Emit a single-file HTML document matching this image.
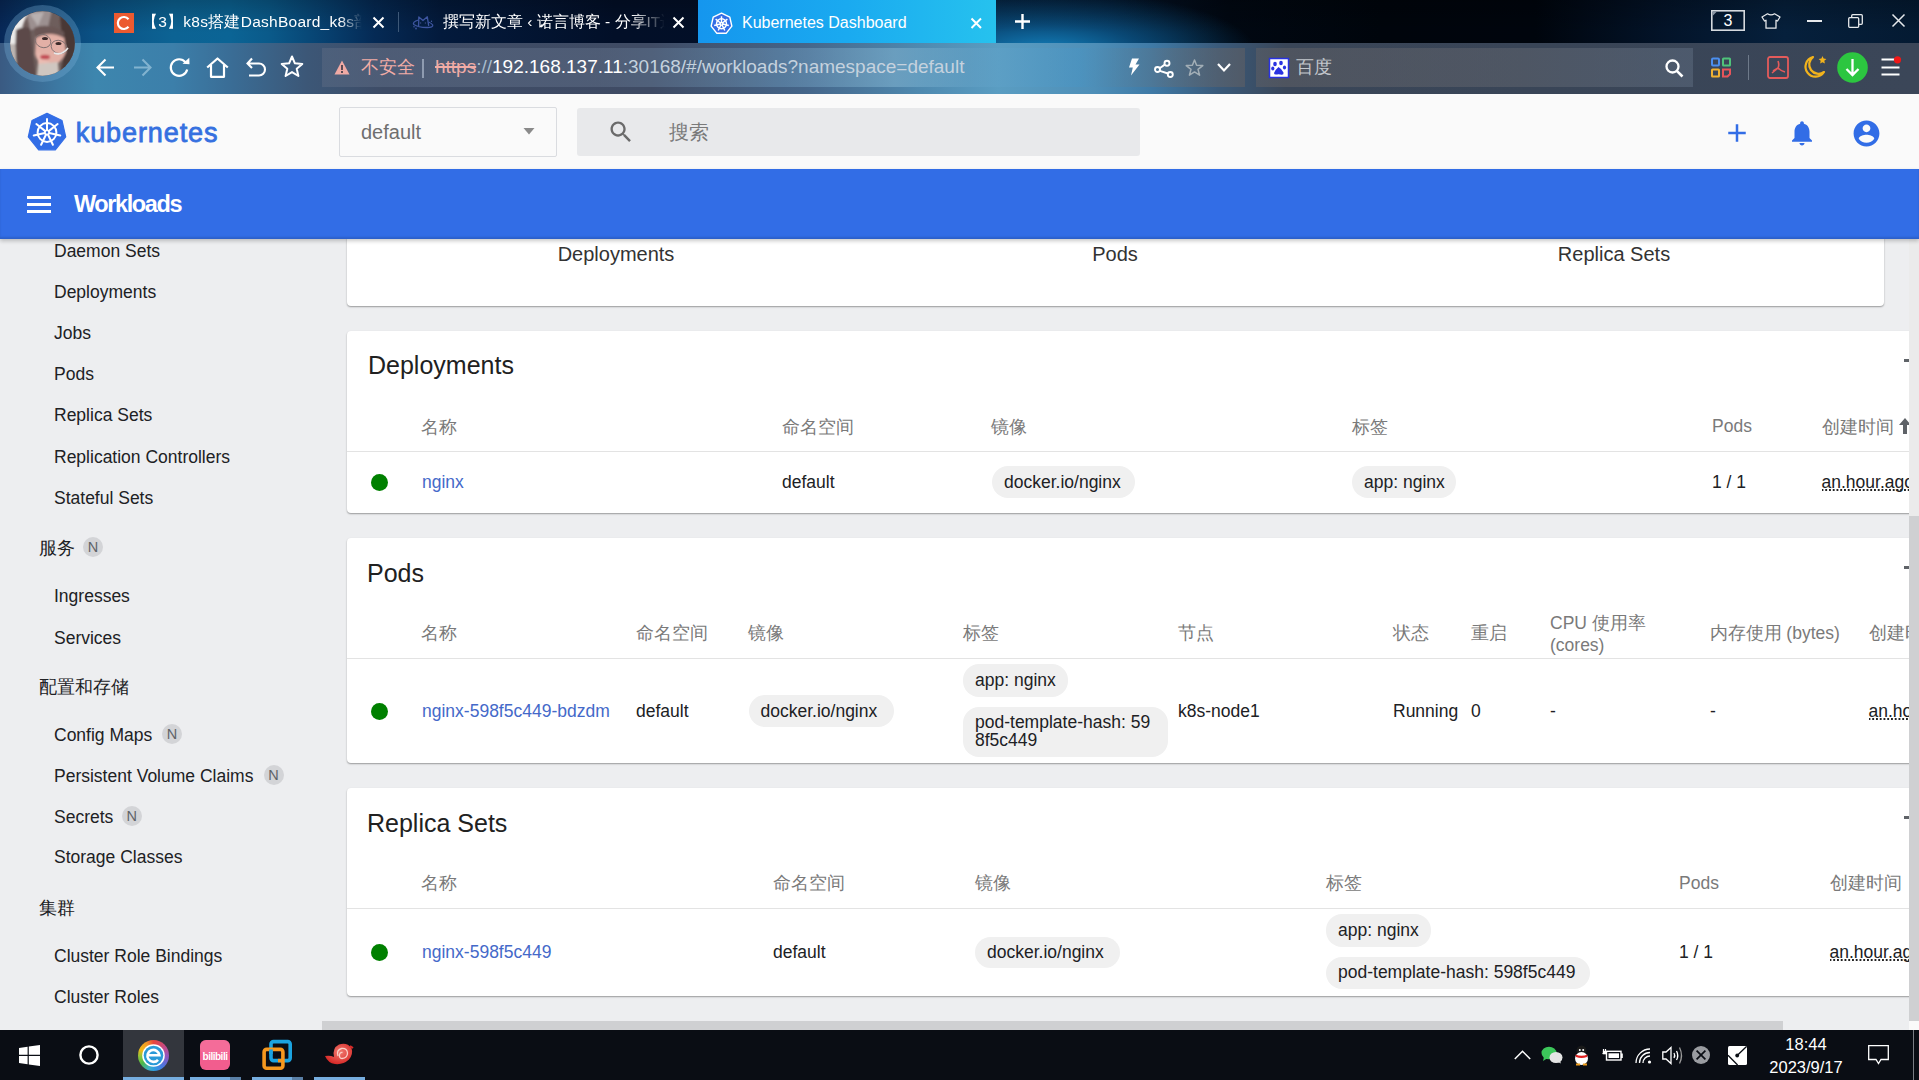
<!DOCTYPE html><html><head><meta charset="utf-8"><style>
*{box-sizing:border-box;margin:0;padding:0}
html,body{width:1919px;height:1080px;overflow:hidden;background:#edeef0;font-family:"Liberation Sans",sans-serif}
body{position:relative}
.a,.t{position:absolute}
.t{white-space:nowrap}
.badge{position:absolute;width:20px;height:20px;border-radius:10px;background:#d3d4d7;color:#5f6368;font-size:14.5px;text-align:center;line-height:21px}
.chip{position:absolute;background:#f0f0f0;border-radius:16px}
.dot{position:absolute;width:17px;height:17px;border-radius:50%;background:#008000}
.card{position:absolute;background:#fff;border-radius:4px;box-shadow:0 1px 2px rgba(0,0,0,.28),0 1px 1px rgba(0,0,0,.10)}
.ago{background-image:radial-gradient(circle at 1px 1px,#222 0.9px,rgba(0,0,0,0) 1.25px);background-size:3.75px 2px;background-repeat:repeat-x;background-position:-0.5px 100%;padding-left:0}
svg{position:absolute;overflow:visible}
</style></head><body>
<div class="a" style="left:0px;top:0px;width:1919px;height:43px;background:linear-gradient(90deg,#072858 0%,#093a6c 2%,#0b5285 5%,#0c6394 9%,#0b6495 12%,#0a5a8a 14%,#07406f 17%,#052a55 19.5%,#031a3c 23%,#020f28 32%,#030f26 48%,#041c38 52%,#03142a 58%,#010812 64%,#00050c 72%,#00050d 80%,#03142a 87%,#06203c 93%,#041a32 100%)"></div>
<div class="a" style="left:996px;top:0px;width:400px;height:43px;background:radial-gradient(ellipse 210px 62px at 50px 52px,rgba(20,130,190,1) 0%,rgba(12,95,150,.7) 45%,rgba(5,40,70,0) 100%)"></div>
<div class="a" style="left:0px;top:0px;width:1919px;height:43px;background:linear-gradient(180deg,rgba(0,0,0,.22),rgba(0,0,0,0) 75%)"></div>
<div class="a" style="left:0px;top:43px;width:1919px;height:51px;background:linear-gradient(90deg,#3a5a82 0%,#3c78a2 3%,#3d86ae 5%,#3c7faa 9%,#3a6d96 12%,#3c5777 16%,#3e4c66 20%,#3f4b64 34%,#45668a 42%,#4f8ab0 48%,#5a9dc2 52%,#4e8fb8 57%,#3f7aa6 60%,#3a5a7a 63.5%,#3a4658 67%,#394557 80%,#3b4658 100%)"></div>
<div class="a" style="left:322px;top:48px;width:923px;height:39px;background:linear-gradient(90deg,rgba(90,105,130,.55) 0%,rgba(95,110,135,.5) 30%,rgba(120,170,205,.35) 50%,rgba(150,200,225,.4) 62%,rgba(110,170,205,.3) 70%,rgba(70,150,200,.35) 82%,rgba(100,110,120,.45) 92%,rgba(95,95,100,.6) 100%)"></div>
<div class="a" style="left:1256px;top:48px;width:437px;height:39px;background:linear-gradient(90deg,rgba(95,95,100,.55),rgba(95,100,110,.55) 60%,rgba(95,110,130,.5))"></div>
<svg style="left:0px;top:0px" width="86" height="86" viewBox="0 0 86 86">
<defs><clipPath id="av"><circle cx="42.5" cy="43.5" r="32.3"/></clipPath>
<filter id="bl" x="-10%" y="-10%" width="120%" height="120%"><feGaussianBlur stdDeviation="1.3"/></filter>
<filter id="bl2"><feGaussianBlur stdDeviation="0.6"/></filter></defs>
<circle cx="42.5" cy="43.5" r="35.4" fill="none" stroke="rgba(120,175,215,.33)" stroke-width="6.2"/>
<g clip-path="url(#av)">
<rect x="0" y="0" width="86" height="86" fill="#6e5e5c"/>
<g filter="url(#bl)">
<path d="M6 8 L30 8 L24 22 L18 40 L14 58 L6 58 Z" fill="#ecebea"/>
<path d="M6 44 L16 44 L20 62 L10 66 Z" fill="#bdb6b2"/>
<path d="M26 10 L52 10 L48 28 L30 30 Z" fill="#9c9090"/>
<path d="M30 14 L44 12 L38 26 Z" fill="#b8b0b0"/>
<path d="M16 30 Q22 26 30 28 L36 80 L20 80 Q14 60 16 30 Z" fill="#5c4a48"/>
<path d="M60 16 L76 20 L78 80 L58 80 Q66 60 62 40 Z" fill="#4a3836"/>
<path d="M36 33 Q50 28 64 36 L66 52 Q62 64 50 66 Q38 66 35 54 Z" fill="#e3b0a6"/>
<path d="M38 50 Q42 60 50 62 L46 68 L38 66 Z" fill="#eabcb2"/>
<path d="M34 28 Q48 22 64 32 L64 38 Q50 30 36 38 Z" fill="#6a5654"/>
<path d="M38 64 L58 62 L60 86 L36 86 Z" fill="#cfc6c0"/>
<ellipse cx="45" cy="57" rx="5" ry="2.3" fill="#c24a52"/>
</g>
<g filter="url(#bl2)">
<ellipse cx="45" cy="38.5" rx="3" ry="1.6" fill="#3a2a2a"/>
<ellipse cx="58.5" cy="43.5" rx="3" ry="1.6" fill="#3a2a2a"/>
<g fill="none" stroke="#807070" stroke-width="0.9"><ellipse cx="43" cy="41" rx="8" ry="6.5" transform="rotate(20 43 41)"/><ellipse cx="59" cy="47" rx="8" ry="6.5" transform="rotate(20 59 47)"/></g>
<path d="M54 53 Q62 56 68 48" fill="none" stroke="#e8e8e8" stroke-width="1.6"/>
</g>
</g></svg>
<div class="a" style="left:114px;top:13px;width:20px;height:20px;background:#ec5a30"></div>
<svg style="left:114px;top:13px" width="20" height="20" viewBox="0 0 20 20"><path d="M14.5 6.2 A6 6 0 1 0 14.5 13.8" fill="none" stroke="#fff" stroke-width="2.2"/></svg>
<div class="t" style="left:142px;top:12px;font-size:15.5px;letter-spacing:0.25px;line-height:20px;color:#fff;width:222px;overflow:hidden;-webkit-mask-image:linear-gradient(90deg,#000 89%,transparent 99%)">【3】k8s搭建DashBoard_k8s部署</div>
<svg style="left:373px;top:17px" width="11" height="11" viewBox="0 0 11 11"><path d="M0.5 0.5 L10.5 10.5 M10.5 0.5 L0.5 10.5" stroke="#fff" stroke-width="2"/></svg>
<div class="a" style="left:398px;top:12px;width:1.2px;height:20px;background:#3d5878"></div>
<svg style="left:410px;top:12px" width="26" height="20" viewBox="0 0 26 20"><g fill="none" stroke="#3d55a0" stroke-width="1.3" stroke-linejoin="round"><path d="M8.6 14 L8.8 5 L13 8.5 L17.3 4.8 L18.7 13.8"/><path d="M8.5 8 Q2 10 3.8 12.5 Q8 15.5 17 15.5 Q23.5 15.5 22.7 13 Q22 11.5 18.5 10"/></g><circle cx="10.6" cy="11" r="0.7" fill="#3a4a80"/><circle cx="15.4" cy="11" r="0.7" fill="#3a4a80"/><circle cx="4" cy="14.8" r="0.8" fill="#3d55a0"/><circle cx="6" cy="16.5" r="0.9" fill="#3d55a0"/><circle cx="21.5" cy="9.3" r="0.7" fill="#4a60a8"/></svg>
<div class="t" style="left:443px;top:12px;font-size:15.5px;line-height:20px;color:#fff;width:222px;overflow:hidden;-webkit-mask-image:linear-gradient(90deg,#000 85%,transparent)">撰写新文章 ‹ 诺言博客 - 分享IT运维</div>
<svg style="left:673px;top:17px" width="11" height="11" viewBox="0 0 11 11"><path d="M0.5 0.5 L10.5 10.5 M10.5 0.5 L0.5 10.5" stroke="#fff" stroke-width="2"/></svg>
<div class="a" style="left:698px;top:0px;width:298px;height:43px;background:linear-gradient(90deg,#1596ee,#1aaaf0 50%,#26c2ee)"></div>
<svg style="left:711px;top:13px" width="21" height="21" viewBox="0 0 38 38">
<path d="M19.00 0.30 L34.01 7.53 L37.72 23.77 L27.33 36.80 L10.67 36.80 L0.28 23.77 L3.99 7.53 Z" fill="#326de6" stroke="#fff" stroke-width="2.6" stroke-linejoin="round"/>
<g stroke="#fff" stroke-width="2.6" fill="none"><circle cx="19" cy="19.5" r="9"/><circle cx="19" cy="19.5" r="2.4"/>
<line x1="19.00" y1="17.30" x2="19.00" y2="5.90"/><line x1="20.72" y1="18.13" x2="29.63" y2="11.02"/><line x1="21.14" y1="19.99" x2="32.26" y2="22.53"/><line x1="19.95" y1="21.48" x2="24.90" y2="31.75"/><line x1="18.05" y1="21.48" x2="13.10" y2="31.75"/><line x1="16.86" y1="19.99" x2="5.74" y2="22.53"/><line x1="17.28" y1="18.13" x2="8.37" y2="11.02"/></g></svg>
<div class="t" style="left:742px;top:12.5px;font-size:16px;line-height:20px;color:#fff">Kubernetes Dashboard</div>
<svg style="left:971px;top:18px" width="10.5" height="10.5" viewBox="0 0 10.5 10.5"><path d="M0.5 0.5 L10.0 10.0 M10.0 0.5 L0.5 10.0" stroke="#fff" stroke-width="2"/></svg>
<svg style="left:1015px;top:14px" width="15" height="15" viewBox="0 0 15 15"><path d="M7.5 0 V15 M0 7.5 H15" stroke="#fff" stroke-width="2.4"/></svg>
<svg style="left:1711px;top:10px" width="34" height="21" viewBox="0 0 34 21"><rect x="0.8" y="0.8" width="32.4" height="19.4" fill="none" stroke="#d5d9de" stroke-width="1.6"/><path d="M1.5 1.5 L6 1.5 L1.5 6 Z" fill="#8a96a4"/></svg>
<div class="t" style="left:1711px;top:10px;width:34px;text-align:center;font-size:16px;line-height:21px;color:#fff">3</div>
<svg style="left:1761px;top:13px" width="20" height="16" viewBox="0 0 20 16"><path d="M6.5 0.8 Q10 3 13.5 0.8 L19 4 L16.5 8 L15 7.2 L15 15.2 L5 15.2 L5 7.2 L3.5 8 L1 4 Z" fill="none" stroke="#e6e9ec" stroke-width="1.3" stroke-linejoin="round"/></svg>
<div class="a" style="left:1807px;top:20px;width:15px;height:1.6px;background:#e6e9ec"></div>
<svg style="left:1848px;top:14px" width="15" height="14" viewBox="0 0 15 14"><rect x="0.7" y="3.7" width="10" height="9.6" rx="1" fill="none" stroke="#e6e9ec" stroke-width="1.3"/><path d="M3.7 3.5 V1.7 Q3.7 0.7 4.7 0.7 H13.3 Q14.3 0.7 14.3 1.7 V9.3 Q14.3 10.3 13.3 10.3 H11" fill="none" stroke="#e6e9ec" stroke-width="1.3"/></svg>
<svg style="left:1892px;top:14px" width="13" height="13" viewBox="0 0 13 13"><path d="M0.5 0.5 L12.5 12.5 M12.5 0.5 L0.5 12.5" stroke="#e6e9ec" stroke-width="1.5"/></svg>
<svg style="left:96px;top:58px" width="19" height="19" viewBox="0 0 19 19"><path d="M18 9.5 H2 M9.5 1.5 L1.5 9.5 L9.5 17.5" fill="none" stroke="#ffffff" stroke-width="2.1"/></svg>
<svg style="left:133px;top:58px" width="19" height="19" viewBox="0 0 19 19"><path d="M1 9.5 H17 M9.5 1.5 L17.5 9.5 L9.5 17.5" fill="none" stroke="#82b3cf" stroke-width="2.1"/></svg>
<svg style="left:169px;top:57px" width="22" height="21" viewBox="0 0 22 21"><path d="M18.2 12.5 A8.3 8.3 0 1 1 16.5 5.2" fill="none" stroke="#ffffff" stroke-width="2.2"/><path d="M13.5 6.8 L20.5 7.2 L20.3 0.8 Z" fill="#ffffff"/></svg>
<svg style="left:206px;top:57px" width="23" height="21" viewBox="0 0 23 21"><path d="M1.2 10.5 L11.5 1.5 L21.8 10.5 M5 8 V19.8 H18 V8" fill="none" stroke="#ffffff" stroke-width="2.2" stroke-linejoin="round"/></svg>
<svg style="left:246px;top:57px" width="21" height="20" viewBox="0 0 21 20"><path d="M6 1.5 L1.5 6.5 L6 11 M1.8 6.5 H13 A6 6 0 0 1 13 18.5 H3" fill="none" stroke="#ffffff" stroke-width="2.1"/></svg>
<svg style="left:280px;top:55px" width="24" height="23" viewBox="0 0 24 23"><path d="M12 1.5 L14.9 8.3 L22.3 8.9 L16.7 13.7 L18.4 21 L12 17.1 L5.6 21 L7.3 13.7 L1.7 8.9 L9.1 8.3 Z" fill="none" stroke="#ffffff" stroke-width="2" stroke-linejoin="round"/></svg>
<svg style="left:334px;top:60px" width="16" height="15" viewBox="0 0 16 15"><path d="M8 0.5 L15.5 14.5 H0.5 Z" fill="#f0aaa4"/><rect x="7" y="5" width="2" height="5" fill="#5a4a55"/><rect x="7" y="11" width="2" height="2" fill="#5a4a55"/></svg>
<div class="t" style="left:361px;top:57px;font-size:17.5px;line-height:21px;color:#f1aca6">不安全</div>
<div class="a" style="left:422px;top:59px;width:1.5px;height:19px;background:#8e9bb0"></div>
<div class="t" style="left:435px;top:56px;font-size:19px;line-height:22px;color:#c5d2de"><span style="color:#f1aca6;text-decoration:line-through;text-decoration-thickness:1.5px">https</span><span style="color:#a9bccd">://</span><span style="color:#ffffff">192.168.137.11</span>:30168/#/workloads?namespace=default</div>
<svg style="left:1128px;top:58px" width="12" height="18" viewBox="0 0 12 18"><path d="M4 0.5 H11 L7.5 6.5 H11.5 L3 17.5 L4.8 9.5 H1 Z" fill="#fff"/></svg>
<svg style="left:1154px;top:60px" width="20" height="18" viewBox="0 0 20 18"><g fill="none" stroke="#fff" stroke-width="1.9"><circle cx="3.5" cy="9.5" r="2.5"/><circle cx="13" cy="3.3" r="2.5"/><circle cx="16.3" cy="14.5" r="2.5"/><path d="M5.6 8.2 L10.8 4.6 M5.8 10.8 L14 13.5"/></g></svg>
<svg style="left:1185px;top:59px" width="19" height="17" viewBox="0 0 19 17"><path d="M9.5 1 L11.6 6.3 L17.8 6.6 L13 10.3 L14.6 16.2 L9.5 12.9 L4.4 16.2 L6 10.3 L1.2 6.6 L7.4 6.3 Z" fill="none" stroke="#a2aeb6" stroke-width="1.5" stroke-linejoin="round"/></svg>
<svg style="left:1217px;top:63px" width="14" height="9" viewBox="0 0 14 9"><path d="M1 1 L7 7.5 L13 1" fill="none" stroke="#fff" stroke-width="2.2"/></svg>
<svg style="left:1269px;top:58px" width="20" height="20" viewBox="0 0 20 20"><rect x="0.5" y="0.5" width="19" height="19" fill="#fff" stroke="#2932e1" stroke-width="1.5"/><g fill="#2932e1"><ellipse cx="6" cy="6" rx="1.8" ry="2.3"/><ellipse cx="12" cy="5" rx="1.8" ry="2.3"/><ellipse cx="3.8" cy="10.5" rx="1.6" ry="2"/><ellipse cx="15.5" cy="9.5" rx="1.6" ry="2"/><path d="M9.5 9 Q6 12 5 15 Q5 17 8 16.5 Q10 16 12.5 16.8 Q15 17 14.5 14.5 Q13 11 9.5 9 Z"/></g></svg>
<div class="t" style="left:1296px;top:57px;font-size:17.5px;line-height:21px;color:#c3c7cd">百度</div>
<svg style="left:1665px;top:59px" width="19" height="19" viewBox="0 0 19 19"><circle cx="7.5" cy="7.5" r="6" fill="none" stroke="#fff" stroke-width="2.3"/><path d="M11.8 11.8 L17.5 17.5" stroke="#fff" stroke-width="2.6"/></svg>
<svg style="left:1711px;top:57px" width="20" height="21" viewBox="0 0 20 21"><g fill="none" stroke-width="2"><rect x="1" y="1.5" width="7" height="7" rx="1" stroke="#4b8ff0"/><rect x="12" y="1.5" width="7" height="7" rx="0.5" stroke="#4fc37a"/><rect x="1" y="12.5" width="7" height="7" rx="0.5" stroke="#f0b132"/><path d="M12 12.5 H19 V17 L16.5 19.5 H12 Z" stroke="#e8545a"/></g></svg>
<div class="a" style="left:1748px;top:55px;width:1.2px;height:25px;background:#6e7a8a"></div>
<svg style="left:1767px;top:56px" width="22" height="23" viewBox="0 0 22 23"><rect x="1" y="1" width="20" height="21" rx="2" fill="none" stroke="#e45b5b" stroke-width="1.8"/><path d="M11 5 Q12.5 9 11 12 L5 17 M11 12 Q14 15 18 16 M11 12 L6 15" fill="none" stroke="#e45b5b" stroke-width="1.6"/></svg>
<svg style="left:1803px;top:55px" width="25" height="24" viewBox="0 0 25 24"><path d="M10 2 A10 10 0 1 0 21 17 A8 8 0 0 1 10 2 Z" fill="none" stroke="#f2b31c" stroke-width="2.2" stroke-linejoin="round"/><path d="M19.5 1 L20.6 3.6 L23.4 3.9 L21.3 5.8 L21.9 8.6 L19.5 7.2 L17.1 8.6 L17.7 5.8 L15.6 3.9 L18.4 3.6 Z" fill="#f2b31c"/></svg>
<svg style="left:1837px;top:52px" width="31" height="31" viewBox="0 0 31 31"><circle cx="15.5" cy="15.5" r="15.3" fill="#2cc640"/><path d="M15.5 7 V23 M9.5 17 L15.5 23 L21.5 17" fill="none" stroke="#fff" stroke-width="2.3"/></svg>
<svg style="left:1881px;top:56px" width="22" height="22" viewBox="0 0 22 22"><g stroke="#fff" stroke-width="2.2"><path d="M0.5 3.5 H14 M0.5 11.5 H18.5 M0.5 18.5 H18.5"/></g><circle cx="16.5" cy="3.8" r="3.6" fill="#f01818"/></svg>
<div class="a" style="left:0px;top:94px;width:1919px;height:75px;background:#fafafa"></div>
<svg style="left:28px;top:113px" width="38" height="38" viewBox="0 0 38 38">
<path d="M19.00 0.30 L34.01 7.53 L37.72 23.77 L27.33 36.80 L10.67 36.80 L0.28 23.77 L3.99 7.53 Z" fill="#326de6" stroke="#326de6" stroke-width="1.2" stroke-linejoin="round"/>
<g stroke="#fff" stroke-width="2" fill="none" stroke-linecap="round">
<circle cx="19" cy="19.5" r="9.4"/><circle cx="19" cy="19.5" r="2.2" stroke-width="1.6"/>
<line x1="19.00" y1="17.30" x2="19.00" y2="5.90"/><line x1="20.72" y1="18.13" x2="29.63" y2="11.02"/><line x1="21.14" y1="19.99" x2="32.26" y2="22.53"/><line x1="19.95" y1="21.48" x2="24.90" y2="31.75"/><line x1="18.05" y1="21.48" x2="13.10" y2="31.75"/><line x1="16.86" y1="19.99" x2="5.74" y2="22.53"/><line x1="17.28" y1="18.13" x2="8.37" y2="11.02"/>
</g></svg>
<div class="t " style="left:75.8px;top:118.14px;font-size:27px;line-height:31px;color:#3570e0;letter-spacing:0.9px;-webkit-text-stroke:0.8px #3570e0;">kubernetes</div>
<div class="a" style="left:339px;top:107px;width:218px;height:50px;border:1px solid #dadce0;border-radius:2px;background:#fafafa"></div>
<div class="t " style="left:361px;top:120.87px;font-size:20px;line-height:23px;color:#6f6f6f;">default</div>
<svg style="left:523px;top:128px" width="12" height="7"><path d="M0.5 0 L11.5 0 L6 6.5 Z" fill="#8a8a8a"/></svg>
<div class="a" style="left:577px;top:108px;width:563px;height:48px;background:#e8e9eb;border-radius:3px"></div>
<svg style="left:607px;top:118px" width="28" height="28" viewBox="0 0 24 24"><path fill="#6a6a6a" d="M15.5 14h-.79l-.28-.27C15.41 12.59 16 11.11 16 9.5 16 5.91 13.09 3 9.5 3S3 5.91 3 9.5 5.91 16 9.5 16c1.61 0 3.090-.59 4.230-1.57l.27.28v.79l5 4.99L20.49 19l-4.990-5zm-6 0C7.01 14 5 11.99 5 9.5S7.01 5 9.5 5 14 7.01 14 9.5 11.99 14 9.5 14z"/></svg>
<div class="t " style="left:669px;top:120.57px;font-size:20px;line-height:23px;color:#7a7a7a;">搜索</div>
<svg style="left:1722px;top:118px" width="30" height="30" viewBox="0 0 24 24"><path fill="#326de6" d="M19 13h-6v6h-2v-6H5v-2h6V5h2v6h6v2z"/></svg>
<svg style="left:1787px;top:118px" width="30" height="30" viewBox="0 0 24 24"><path fill="#326de6" d="M12 22c1.1 0 2-.9 2-2h-4c0 1.1.89 2 2 2zm6-6v-5c0-3.07-1.64-5.64-4.5-6.32V4c0-.83-.67-1.5-1.5-1.5s-1.5.67-1.5 1.5v.68C7.63 5.36 6 7.92 6 11v5l-2 2v1h16v-1l-2-2z"/></svg>
<svg style="left:1851px;top:118px" width="31" height="31" viewBox="0 0 24 24"><path fill="#326de6" d="M12 2C6.48 2 2 6.48 2 12s4.48 10 10 10 10-4.48 10-10S17.52 2 12 2zm0 3c1.66 0 3 1.34 3 3s-1.34 3-3 3-3-1.34-3-3 1.34-3 3-3zm0 14.2c-2.5 0-4.71-1.28-6-3.22.03-1.99 4-3.08 6-3.08 1.99 0 5.970 1.09 6 3.08-1.29 1.940-3.5 3.220-6 3.220z"/></svg>
<div class="a" style="left:0px;top:169px;width:1919px;height:70px;background:#326de6;z-index:5;box-shadow:inset 0 -2px 2px rgba(0,0,0,.12),0 2px 4px rgba(0,0,0,.22)"></div>
<div class="a" style="left:27px;top:196px;width:24px;height:18px;z-index:6"><div class="a" style="left:0;top:0;width:24px;height:3px;background:#fff"></div><div class="a" style="left:0;top:7px;width:24px;height:3px;background:#fff"></div><div class="a" style="left:0;top:14px;width:24px;height:3px;background:#fff"></div></div>
<div class="t " style="left:74px;top:191.36px;font-size:23.5px;line-height:27px;color:#fff;font-weight:700;letter-spacing:-1.4px;z-index:6;">Workloads</div>
<div class="a" style="left:0px;top:239px;width:322px;height:791px;background:#edeef0;overflow:hidden"></div>
<div class="a" style="left:0;top:0;width:322px;height:1030px;overflow:hidden;clip-path:inset(239px 0 0 0)"><div class="t " style="left:54px;top:240.94px;font-size:17.5px;line-height:20px;color:#202124;">Daemon Sets</div>
<div class="t " style="left:54px;top:281.94px;font-size:17.5px;line-height:20px;color:#202124;">Deployments</div>
<div class="t " style="left:54px;top:322.94px;font-size:17.5px;line-height:20px;color:#202124;">Jobs</div>
<div class="t " style="left:54px;top:364.44px;font-size:17.5px;line-height:20px;color:#202124;">Pods</div>
<div class="t " style="left:54px;top:405.44px;font-size:17.5px;line-height:20px;color:#202124;">Replica Sets</div>
<div class="t " style="left:54px;top:446.94px;font-size:17.5px;line-height:20px;color:#202124;">Replication Controllers</div>
<div class="t " style="left:54px;top:487.94px;font-size:17.5px;line-height:20px;color:#202124;">Stateful Sets</div>
<div class="t " style="left:39px;top:537.94px;font-size:17.5px;line-height:20px;color:#202124;">服务</div>
<div class="t " style="left:54px;top:586.44px;font-size:17.5px;line-height:20px;color:#202124;">Ingresses</div>
<div class="t " style="left:54px;top:627.54px;font-size:17.5px;line-height:20px;color:#202124;">Services</div>
<div class="t " style="left:39px;top:676.94px;font-size:17.5px;line-height:20px;color:#202124;">配置和存储</div>
<div class="t " style="left:54px;top:725.34px;font-size:17.5px;line-height:20px;color:#202124;">Config Maps</div>
<div class="t " style="left:54px;top:765.94px;font-size:17.5px;line-height:20px;color:#202124;">Persistent Volume Claims</div>
<div class="t " style="left:54px;top:807.24px;font-size:17.5px;line-height:20px;color:#202124;">Secrets</div>
<div class="t " style="left:54px;top:847.44px;font-size:17.5px;line-height:20px;color:#202124;">Storage Classes</div>
<div class="t " style="left:39px;top:897.94px;font-size:17.5px;line-height:20px;color:#202124;">集群</div>
<div class="t " style="left:54px;top:945.94px;font-size:17.5px;line-height:20px;color:#202124;">Cluster Role Bindings</div>
<div class="t " style="left:54px;top:986.64px;font-size:17.5px;line-height:20px;color:#202124;">Cluster Roles</div>
<div class="t " style="left:54px;top:1027.94px;font-size:17.5px;line-height:20px;color:#202124;">Role Bindings</div>
<div class="badge" style="left:83px;top:537px">N</div>
<div class="badge" style="left:162px;top:724.4px">N</div>
<div class="badge" style="left:263.6px;top:765px">N</div>
<div class="badge" style="left:121.80000000000001px;top:806px">N</div></div>
<div class="a" style="left:0;top:0;width:1909px;height:1021px;overflow:hidden;clip-path:inset(239px 0 0 322px)"><div class="card" style="left:347px;top:180px;width:1537px;height:126px"></div>
<div class="t " style="left:466px;top:243.17px;font-size:20px;line-height:23px;color:#333333;width:300px;text-align:center;">Deployments</div>
<div class="t " style="left:965px;top:243.17px;font-size:20px;line-height:23px;color:#333333;width:300px;text-align:center;">Pods</div>
<div class="t " style="left:1464px;top:243.17px;font-size:20px;line-height:23px;color:#333333;width:300px;text-align:center;">Replica Sets</div>
<div class="card" style="left:347px;top:331px;width:1600px;height:182px"></div>
<div class="t " style="left:368px;top:351.44px;font-size:25px;line-height:29px;color:#212121;">Deployments</div>
<div class="a" style="left:1904px;top:359px;width:5px;height:2.5px;background:#5f6368"></div>
<div class="t " style="left:421px;top:416.54px;font-size:17.5px;line-height:20px;color:#7a7a7a;">名称</div>
<div class="t " style="left:782px;top:416.54px;font-size:17.5px;line-height:20px;color:#7a7a7a;">命名空间</div>
<div class="t " style="left:991px;top:416.54px;font-size:17.5px;line-height:20px;color:#7a7a7a;">镜像</div>
<div class="t " style="left:1352px;top:416.54px;font-size:17.5px;line-height:20px;color:#7a7a7a;">标签</div>
<div class="t " style="left:1712px;top:415.94px;font-size:17.5px;line-height:20px;color:#7a7a7a;">Pods</div>
<div class="t " style="left:1822px;top:416.54px;font-size:17.5px;line-height:20px;color:#7a7a7a;">创建时间</div>
<svg style="left:1899px;top:418px" width="12" height="16" viewBox="0 0 12 16"><path d="M6 0 L12 7 L8 7 L8 16 L4 16 L4 7 L0 7 Z" fill="#5f6368"/></svg>
<div class="a" style="left:347px;top:451px;width:1600px;height:1px;background:#e3e3e3"></div>
<div class="dot" style="left:370.5px;top:473.7px"></div>
<div class="t " style="left:422px;top:471.74px;font-size:17.5px;line-height:20px;color:#4469c9;">nginx</div>
<div class="t " style="left:782px;top:471.74px;font-size:17.5px;line-height:20px;color:#202124;">default</div>
<div class="chip" style="left:992px;top:466px;width:143px;height:32px;border-radius:16.0px"></div><div class="t " style="left:1004px;top:471.74px;font-size:17.5px;line-height:20px;color:#202124;">docker.io/nginx</div>
<div class="chip" style="left:1352px;top:466px;width:104px;height:32px;border-radius:16.0px"></div><div class="t " style="left:1364px;top:471.74px;font-size:17.5px;line-height:20px;color:#202124;">app: nginx</div>
<div class="t " style="left:1712px;top:471.74px;font-size:17.5px;line-height:20px;color:#202124;">1 / 1</div>
<div class="t ago" style="left:1821.5px;top:472.74px;font-size:17.5px;line-height:18px;color:#202124;">an.hour.ago</div>
<div class="card" style="left:347px;top:538px;width:1600px;height:225px"></div>
<div class="t " style="left:367px;top:559.14px;font-size:25px;line-height:29px;color:#212121;">Pods</div>
<div class="a" style="left:1904px;top:566px;width:5px;height:2.5px;background:#5f6368"></div>
<div class="t " style="left:421px;top:623.04px;font-size:17.5px;line-height:20px;color:#7a7a7a;">名称</div>
<div class="t " style="left:636px;top:623.04px;font-size:17.5px;line-height:20px;color:#7a7a7a;">命名空间</div>
<div class="t " style="left:748px;top:623.04px;font-size:17.5px;line-height:20px;color:#7a7a7a;">镜像</div>
<div class="t " style="left:963px;top:623.04px;font-size:17.5px;line-height:20px;color:#7a7a7a;">标签</div>
<div class="t " style="left:1178px;top:623.04px;font-size:17.5px;line-height:20px;color:#7a7a7a;">节点</div>
<div class="t " style="left:1393px;top:623.04px;font-size:17.5px;line-height:20px;color:#7a7a7a;">状态</div>
<div class="t " style="left:1471px;top:623.04px;font-size:17.5px;line-height:20px;color:#7a7a7a;">重启</div>
<div class="t " style="left:1550px;top:613.44px;font-size:17.5px;line-height:20px;color:#7a7a7a;">CPU 使用率</div>
<div class="t " style="left:1550px;top:635.44px;font-size:17.5px;line-height:20px;color:#7a7a7a;">(cores)</div>
<div class="t " style="left:1709.5px;top:623.44px;font-size:17.5px;line-height:20px;color:#7a7a7a;">内存使用 (bytes)</div>
<div class="t " style="left:1869px;top:623.04px;font-size:17.5px;line-height:20px;color:#7a7a7a;">创建时间</div>
<div class="a" style="left:347px;top:658px;width:1600px;height:1px;background:#e3e3e3"></div>
<div class="dot" style="left:370.5px;top:702.5px"></div>
<div class="t " style="left:422px;top:701.34px;font-size:17.5px;line-height:20px;color:#4469c9;">nginx-598f5c449-bdzdm</div>
<div class="t " style="left:636px;top:701.34px;font-size:17.5px;line-height:20px;color:#202124;">default</div>
<div class="chip" style="left:748.5px;top:694.5px;width:145px;height:32px;border-radius:16.0px"></div><div class="t " style="left:760.5px;top:701.34px;font-size:17.5px;line-height:20px;color:#202124;">docker.io/nginx</div>
<div class="chip" style="left:963px;top:664px;width:104.5px;height:33px;border-radius:16px"></div><div class="t " style="left:975px;top:670.44px;font-size:17.5px;line-height:20px;color:#202124;">app: nginx</div>
<div class="chip" style="left:963px;top:707px;width:205px;height:50px;border-radius:16px"></div><div class="t " style="left:975px;top:712.44px;font-size:17.5px;line-height:20px;color:#202124;">pod-template-hash: 59</div><div class="t " style="left:975px;top:730.44px;font-size:17.5px;line-height:20px;color:#202124;">8f5c449</div>
<div class="t " style="left:1178px;top:701.34px;font-size:17.5px;line-height:20px;color:#202124;">k8s-node1</div>
<div class="t " style="left:1393px;top:701.34px;font-size:17.5px;line-height:20px;color:#202124;">Running</div>
<div class="t " style="left:1471px;top:701.34px;font-size:17.5px;line-height:20px;color:#202124;">0</div>
<div class="t " style="left:1550px;top:701.34px;font-size:17.5px;line-height:20px;color:#202124;">-</div>
<div class="t " style="left:1710px;top:701.34px;font-size:17.5px;line-height:20px;color:#202124;">-</div>
<div class="t ago" style="left:1868.5px;top:702.34px;font-size:17.5px;line-height:18px;color:#202124;">an.hour.ago</div>
<div class="card" style="left:347px;top:788px;width:1600px;height:208px"></div>
<div class="t " style="left:367px;top:809.14px;font-size:25px;line-height:29px;color:#212121;">Replica Sets</div>
<div class="a" style="left:1904px;top:816px;width:5px;height:2.5px;background:#5f6368"></div>
<div class="t " style="left:421px;top:873.04px;font-size:17.5px;line-height:20px;color:#7a7a7a;">名称</div>
<div class="t " style="left:773px;top:873.04px;font-size:17.5px;line-height:20px;color:#7a7a7a;">命名空间</div>
<div class="t " style="left:974.5px;top:873.04px;font-size:17.5px;line-height:20px;color:#7a7a7a;">镜像</div>
<div class="t " style="left:1326px;top:873.04px;font-size:17.5px;line-height:20px;color:#7a7a7a;">标签</div>
<div class="t " style="left:1679px;top:872.94px;font-size:17.5px;line-height:20px;color:#7a7a7a;">Pods</div>
<div class="t " style="left:1830px;top:873.04px;font-size:17.5px;line-height:20px;color:#7a7a7a;">创建时间</div>
<div class="a" style="left:347px;top:908px;width:1600px;height:1px;background:#e3e3e3"></div>
<div class="dot" style="left:370.5px;top:943.5px"></div>
<div class="t " style="left:422px;top:941.74px;font-size:17.5px;line-height:20px;color:#4469c9;">nginx-598f5c449</div>
<div class="t " style="left:773px;top:941.74px;font-size:17.5px;line-height:20px;color:#202124;">default</div>
<div class="chip" style="left:975px;top:936.5px;width:145px;height:31.5px;border-radius:15.75px"></div><div class="t " style="left:987px;top:941.74px;font-size:17.5px;line-height:20px;color:#202124;">docker.io/nginx</div>
<div class="chip" style="left:1326px;top:914px;width:105px;height:33px;border-radius:16px"></div><div class="t " style="left:1338px;top:920.44px;font-size:17.5px;line-height:20px;color:#202124;">app: nginx</div>
<div class="chip" style="left:1326px;top:957px;width:264px;height:32px;border-radius:16.0px"></div><div class="t " style="left:1338px;top:962.44px;font-size:17.5px;line-height:20px;color:#202124;">pod-template-hash: 598f5c449</div>
<div class="t " style="left:1679px;top:941.74px;font-size:17.5px;line-height:20px;color:#202124;">1 / 1</div>
<div class="t ago" style="left:1829.5px;top:942.74px;font-size:17.5px;line-height:18px;color:#202124;">an.hour.ago</div></div>
<div class="a" style="left:1909px;top:239px;width:10px;height:782px;background:#ebebeb"></div>
<div class="a" style="left:1909px;top:516px;width:10px;height:505px;background:#cfd0d2"></div>
<div class="a" style="left:322px;top:1021px;width:1587px;height:9px;background:#edeef0"></div>
<div class="a" style="left:322px;top:1021px;width:1461px;height:9px;background:#cfd0d2"></div>
<div class="a" style="left:1909px;top:1021px;width:10px;height:9px;background:#fafafa"></div>
<div class="a" style="left:0px;top:1030px;width:1919px;height:50px;background:#0a0d14"></div>
<svg style="left:19px;top:1045px" width="21" height="21" viewBox="0 0 21 21"><path d="M0 3 L8.6 1.8 V9.8 H0 Z M9.8 1.6 L21 0 V9.8 H9.8 Z M0 11 H8.6 V19.2 L0 18 Z M9.8 11 H21 V21 L9.8 19.4 Z" fill="#fff"/></svg>
<svg style="left:79px;top:1045px" width="20" height="20" viewBox="0 0 20 20"><circle cx="10" cy="10" r="8.6" fill="none" stroke="#fff" stroke-width="2.4"/></svg>
<div class="a" style="left:123px;top:1030px;width:61px;height:50px;background:#33363d"></div>
<div class="a" style="left:123px;top:1077px;width:61px;height:3px;background:#76addf"></div>
<div class="a" style="left:137.5px;top:1039.5px;width:31px;height:31px;border-radius:50%;background:conic-gradient(from 0deg,#e8453c 0deg,#c24a8a 55deg,#8e56c0 95deg,#4a78e0 140deg,#2f9ae0 175deg,#3cb0c8 200deg,#4cb848 235deg,#8cc43c 265deg,#f5b818 295deg,#f29a26 330deg,#e8453c 360deg)"></div>
<svg style="left:137.5px;top:1039.5px" width="31" height="31" viewBox="0 0 31 31"><circle cx="15.5" cy="15.5" r="11.3" fill="#fff"/><circle cx="15.5" cy="15.5" r="9.8" fill="#2a9ad8"/>
<path d="M9.6 15.2 H21.4 A6 6 0 1 0 20 19.8" fill="none" stroke="#fff" stroke-width="2.6"/></svg>
<svg style="left:200px;top:1040px" width="30" height="30" viewBox="0 0 30 30"><rect x="0" y="0" width="30" height="30" rx="6" fill="#f25d8e"/><rect x="0" y="0" width="30" height="14" rx="6" fill="#f57ca4" opacity="0.5"/>
<text x="15" y="20" font-family="Liberation Sans" font-size="10" font-weight="700" fill="#fff" text-anchor="middle" letter-spacing="-0.5">bilibili</text></svg>
<div class="a" style="left:190px;top:1077px;width:51px;height:3px;background:#76addf"></div>
<div class="a" style="left:230px;top:1077px;width:11px;height:3px;background:#5a7fa6"></div>
<svg style="left:262px;top:1039px" width="31" height="32" viewBox="0 0 31 32"><rect x="9" y="2.6" width="19.2" height="19" rx="2.5" fill="none" stroke="#1ba3e0" stroke-width="3.6"/><rect x="2.1" y="10.4" width="18.8" height="18.8" rx="2.5" fill="none" stroke="#f6981e" stroke-width="3.6"/><path d="M9 10.4 V15" stroke="#1ba3e0" stroke-width="3.6"/><path d="M16 21.6 H20.9" stroke="#f6981e" stroke-width="3.6"/></svg>
<div class="a" style="left:252px;top:1077px;width:51px;height:3px;background:#76addf"></div>
<div class="a" style="left:292px;top:1077px;width:11px;height:3px;background:#5a7fa6"></div>
<svg style="left:324px;top:1042px" width="30" height="24" viewBox="0 0 30 24"><defs><radialGradient id="sn" cx="0.55" cy="0.4" r="0.6"><stop offset="0" stop-color="#f07a70"/><stop offset="1" stop-color="#d82a28"/></radialGradient></defs>
<path d="M1 14 Q6 13 10 15 Q8 6 15 2.5 Q23 0 27.5 6 Q29.5 12 25 17.5 Q19 23 11 22 Q4 21 1 14 Z" fill="url(#sn)"/>
<path d="M14 14 Q12 8 17.5 6.5 Q23 6 23.5 11 Q23.5 16 18 16.5 Q15 16.5 15.5 12.5 Q16 10 18.5 10.5" fill="none" stroke="#fbd0c8" stroke-width="1.3"/>
<path d="M26 4 L29 6" stroke="#d82a28" stroke-width="2"/></svg>
<div class="a" style="left:314px;top:1077px;width:51px;height:3px;background:#76addf"></div>
<svg style="left:1514px;top:1050px" width="17" height="10" viewBox="0 0 17 10"><path d="M0.8 9 L8.5 1.3 L16.2 9" fill="none" stroke="#fff" stroke-width="1.5"/></svg>
<svg style="left:1541px;top:1046px" width="22" height="18" viewBox="0 0 22 18"><ellipse cx="8" cy="7" rx="7.5" ry="6.3" fill="#3cc65a"/><path d="M3 11 L2 15 L6 12.5 Z" fill="#3cc65a"/><ellipse cx="15" cy="11.5" rx="6.5" ry="5.5" fill="#e4e4e4"/><path d="M19 15 L20 17.5 L17 16 Z" fill="#e4e4e4"/></svg>
<svg style="left:1574px;top:1045px" width="15" height="21" viewBox="0 0 15 21"><ellipse cx="7.5" cy="6" rx="5" ry="5.5" fill="#1a1a1a"/><ellipse cx="7.5" cy="13.5" rx="6.5" ry="6.5" fill="#fff"/><path d="M1.5 9.5 Q7.5 12 13.5 9.5 L13 12 Q7.5 14 2 12 Z" fill="#e02020"/><path d="M2 19.5 H6 M9 19.5 H13" stroke="#f0a020" stroke-width="2"/><circle cx="5.8" cy="5" r="1" fill="#fff"/><circle cx="9.2" cy="5" r="1" fill="#fff"/></svg>
<svg style="left:1602px;top:1048px" width="21" height="13" viewBox="0 0 21 13"><rect x="4.5" y="3.3" width="14.5" height="8.7" fill="none" stroke="#fff" stroke-width="1.4"/><rect x="19" y="5.5" width="1.8" height="4.5" fill="#fff"/><rect x="6.5" y="5.3" width="10.5" height="4.7" fill="#fff"/><path d="M0.5 5.5 H4.5 M1.5 1 V3 M3.5 1 V3" stroke="#fff" stroke-width="1.2"/><rect x="0.8" y="2.8" width="3.2" height="3.5" fill="#fff"/></svg>
<svg style="left:1635px;top:1048px" width="17" height="16" viewBox="0 0 17 16"><g fill="none" stroke="#fff" stroke-width="1.3"><path d="M1 15 A14 14 0 0 1 15 1"/><path d="M4.5 15 A10.5 10.5 0 0 1 15 4.5"/><path d="M8 15 A7 7 0 0 1 15 8"/></g><circle cx="14.5" cy="14" r="1.6" fill="#fff"/></svg>
<svg style="left:1662px;top:1046px" width="21" height="19" viewBox="0 0 21 19"><path d="M0.8 6 H4 L9 1.5 V17.5 L4 13 H0.8 Z" fill="none" stroke="#fff" stroke-width="1.3"/><g fill="none" stroke="#fff" stroke-width="1.3"><path d="M12 7 Q13.5 9.5 12 12"/><path d="M14.5 5 Q17 9.5 14.5 14"/><path d="M17.5 1.5 Q21.5 9.5 17.5 17.5" stroke="#9a9a9a"/></g></svg>
<svg style="left:1692px;top:1046px" width="18" height="18" viewBox="0 0 18 18"><circle cx="9" cy="9" r="9" fill="#9a9ca1"/><path d="M4.6 4.6 L13.4 13.4 M13.4 4.6 L4.6 13.4" stroke="#0a0d14" stroke-width="1.7"/></svg>
<svg style="left:1727.5px;top:1045.5px" width="19" height="19" viewBox="0 0 19 19"><rect x="0" y="0" width="19" height="19" rx="1.5" fill="#fff"/><path d="M18.5 0.5 L9.2 9.5 M0 9.3 L9.6 19" stroke="#0a0d14" stroke-width="1.3"/><circle cx="9.2" cy="9.5" r="1.9" fill="#0a0d14"/></svg>
<div class="t" style="left:1767px;top:1035px;width:78px;text-align:center;font-size:16.5px;line-height:18px;color:#fff">18:44</div>
<div class="t" style="left:1767px;top:1057.5px;width:78px;text-align:center;font-size:16.5px;line-height:18px;color:#fff">2023/9/17</div>
<svg style="left:1868px;top:1045px" width="21" height="20" viewBox="0 0 21 20"><path d="M0.7 0.7 H20.3 V14.5 H13 L10.5 18.5 L8 14.5 H0.7 Z" fill="none" stroke="#fff" stroke-width="1.3"/></svg>
<div class="a" style="left:1913px;top:1030px;width:1.2px;height:50px;background:#7a7d84"></div>
</body></html>
